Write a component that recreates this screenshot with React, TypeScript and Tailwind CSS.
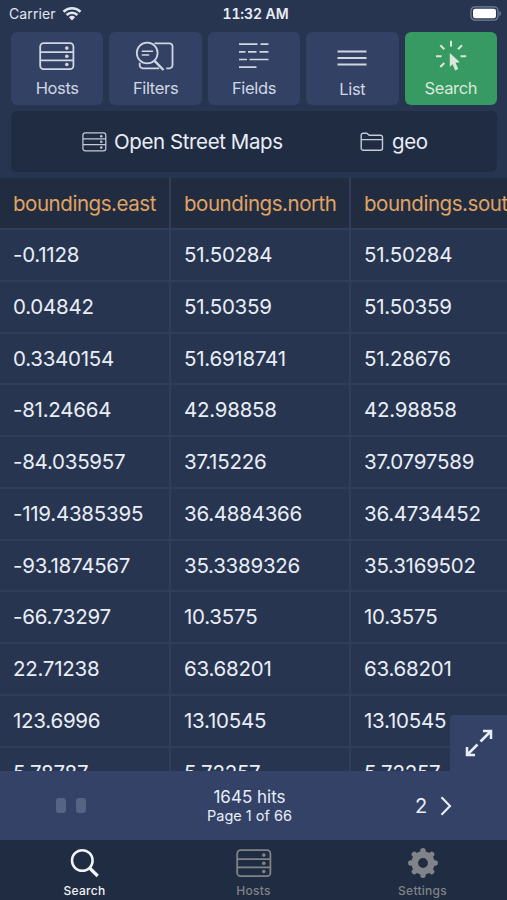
import type { ReactNode } from 'react';

const COLUMNS = ['boundings.east', 'boundings.north', 'boundings.south'];

const ROWS = [
  ['-0.1128', '51.50284', '51.50284'],
  ['0.04842', '51.50359', '51.50359'],
  ['0.3340154', '51.6918741', '51.28676'],
  ['-81.24664', '42.98858', '42.98858'],
  ['-84.035957', '37.15226', '37.0797589'],
  ['-119.4385395', '36.4884366', '36.4734452'],
  ['-93.1874567', '35.3389326', '35.3169502'],
  ['-66.73297', '10.3575', '10.3575'],
  ['22.71238', '63.68201', '63.68201'],
  ['123.6996', '13.10545', '13.10545'],
  ['5.78787', '5.72257', '5.72257'],
];

const HostsIcon = ({ className }: { className?: string }) => (
  <svg viewBox="0 0 36 29" className={className} fill="none" stroke="currentColor" strokeWidth="1.8">
    <rect x="1.2" y="1.2" width="33.2" height="26" rx="3.4" />
    <path d="M1.2 10.1h33.2M1.2 18.4h33.2" />
    <g fill="currentColor" stroke="none">
      <circle cx="27.8" cy="6.1" r="1.8" />
      <circle cx="27.8" cy="14.3" r="1.8" />
      <circle cx="27.8" cy="22.5" r="1.8" />
    </g>
  </svg>
);

const FiltersIcon = () => (
  <svg viewBox="0 0 40 30" className="mr-[2px] h-[30px] w-10" fill="none" stroke="currentColor" strokeWidth="1.8">
    <path d="M19.5 2.3h15a3 3 0 0 1 3 3v19a3 3 0 0 1-3 3h-3.2M4.7 21.8v2.5a3 3 0 0 0 3 3h16.5" />
    <circle cx="12.2" cy="12" r="10.4" />
    <path d="M7.3 10.2h10.2M7.3 13.9h6.3" strokeWidth="1.5" strokeLinecap="round" />
    <path d="M19.6 19.8 28.5 29" strokeWidth="2.5" />
  </svg>
);

const FieldsIcon = () => (
  <svg viewBox="0 0 30 26" className="h-[26px] w-[30px]" fill="none" stroke="currentColor" strokeWidth="1.7">
    <path d="M0 1.2h18.5M21.5 1.2h8M0 8.9h6.5M9 8.9h8.5M20.5 8.9h9M0 16.5h8M10.5 16.5h19M0 24.1h17.5" />
  </svg>
);

const ListIcon = () => (
  <svg viewBox="0 0 30 18" className="mt-[3px] h-[18px] w-[30px]" fill="none" stroke="currentColor" strokeWidth="1.8">
    <path d="M.5 2.5h29M.5 9h29M.5 15.5h29" />
  </svg>
);

const ClickIcon = () => (
  <svg viewBox="0 0 32 32" className="h-8 w-8" fill="none" stroke="currentColor" strokeWidth="2">
    <path d="M16 .8v5.7M1 16.2h5.6M25.5 16.2h5.7M5.3 5.2l4 4.1M27 5.2l-4 4.1M5.3 27l4-4" />
    <path d="M14.8 13 24.8 22.3l-4.3.5 2.8 6.2-3.1 1.4-2.6-6.1-2.8 2.7z" fill="currentColor" stroke="none" />
  </svg>
);

const FolderIcon = () => (
  <svg viewBox="0 0 24 20" className="h-5 w-6" fill="none" stroke="currentColor" strokeWidth="1.4">
    <path d="M1.2 16.3V3.2a2 2 0 0 1 2-2h3.6l2.4 2h11.3a2 2 0 0 1 2 2v11.1a2 2 0 0 1-2 2H3.2a2 2 0 0 1-2-2zM1.2 7.6h21.3" />
  </svg>
);

const WifiIcon = () => (
  <svg viewBox="0 0 20 15" className="h-[15px] w-5" fill="none" stroke="currentColor" strokeWidth="2.6">
    <path d="M1.5 5.7a12.2 12.2 0 0 1 17 0M4.6 9a7.7 7.7 0 0 1 10.8 0" />
    <path d="M6.9 11.3a4.5 4.5 0 0 1 6.2 0L10 14.5z" fill="currentColor" stroke="none" />
  </svg>
);

const BatteryIcon = () => (
  <svg viewBox="0 0 32 15" className="h-[15px] w-8">
    <rect x="1" y=".8" width="27" height="13.4" rx="4" fill="none" stroke="#76819a" strokeWidth="1.2" />
    <rect x="3" y="2.8" width="23" height="9.4" rx="2.2" fill="#fff" />
    <path d="M29.4 5v5c2-.8 2-4.2 0-5z" fill="#76819a" />
  </svg>
);

const GearIcon = () => (
  <svg viewBox="-15 -15 30 30" className="h-[30px] w-[30px]" fill="none" stroke="currentColor">
    <circle r="8.3" strokeWidth="6.8" />
    <path
      d="M0-11V-12.2M0 11V12.2M-11 0H-12.2M11 0H12.2M7.8-7.8l.9-.9M-7.8-7.8l-.9-.9M7.8 7.8l.9.9M-7.8 7.8l-.9.9"
      strokeWidth="5.4"
      strokeLinecap="round"
    />
  </svg>
);

interface ToolButtonProps {
  label: string;
  icon: ReactNode;
  active?: boolean;
  labelClass?: string;
}

const ToolButton = ({ label, icon, active = false, labelClass = 'pt-0' }: ToolButtonProps) => (
  <button
    className={`flex h-[73.5px] flex-col items-center rounded-[6px] ${
      active ? 'bg-[#369a62] text-[#dce8dc]' : 'bg-[#324164] text-[#d0d6e2]'
    }`}
  >
    <span className="flex h-[46.5px] items-center justify-center pt-[3px]">{icon}</span>
    <span className={`text-[16.5px] leading-[20px] tracking-[-0.35px] ${labelClass}`}>{label}</span>
  </button>
);

const TabItem = ({ label, icon, active = false }: ToolButtonProps) => (
  <button className={`flex flex-col items-center ${active ? 'text-[#f1f3f6]' : 'text-[#808387]'}`}>
    <span className="flex h-[43px] items-center justify-center pt-[3px]">{icon}</span>
    <span className="text-[12px] leading-[15px] font-medium tracking-[0.25px]">{label}</span>
  </button>
);

export default function App() {
  return (
    <div className="flex h-[900px] w-[507px] flex-col overflow-hidden bg-[#283551] font-['Inter',sans-serif] text-[#e9eef6]">
      <header className="grid h-[31.5px] shrink-0 grid-cols-3 items-center pr-[5px] pb-[5px] pl-[9px] text-[14px]">
        <div className="flex items-center gap-[6px] tracking-[0.1px] text-[#e0e5ee]">
          Carrier <WifiIcon />
        </div>
        <div className="text-center text-[14px] font-semibold tracking-[-0.1px] tabular-nums">11:32 AM</div>
        <div className="flex justify-end">
          <BatteryIcon />
        </div>
      </header>

      <nav className="grid shrink-0 grid-cols-5 gap-[6px] pr-[10px] pl-[11px]">
        <ToolButton label="Hosts" icon={<HostsIcon className="h-[29px] w-9" />} />
        <ToolButton label="Filters" icon={<FiltersIcon />} />
        <ToolButton label="Fields" icon={<FieldsIcon />} />
        <ToolButton label="List" icon={<ListIcon />} labelClass="pt-[1px]" />
        <ToolButton label="Search" icon={<ClickIcon />} active />
      </nav>

      <div className="mt-[6px] mr-[10px] mb-[6px] ml-[11px] flex h-[61px] shrink-0 items-center rounded-[6px] bg-[#202c42] text-[20.5px] tracking-[-0.4px]">
        <div className="flex w-[343px] items-center gap-[7px] pl-[71px]">
          <HostsIcon className="h-[20px] w-[25px] text-[#c3cad8]" />
          <span className="pt-[2px]">Open Street Maps</span>
        </div>
        <div className="flex items-center gap-[8px] pl-[6px]">
          <span className="text-[#c3cad8]"><FolderIcon /></span>
          <span className="pt-[2px]">geo</span>
        </div>
      </div>

      <main className="relative h-[593px] shrink-0 overflow-hidden">
        <table className="w-[550px] table-fixed border-collapse text-[20.5px] tracking-[-0.45px]">
          <colgroup>
            <col className="w-[170px]" />
            <col className="w-[180px]" />
            <col className="w-[200px]" />
          </colgroup>
          <thead>
            <tr className="h-[51px] border-b-2 border-[#303d5b] bg-[#212c41]">
              {COLUMNS.map((col) => (
                <th key={col} className="border-r-2 border-[#303d5b] p-0 pt-[2px] pl-[13px] text-left font-normal text-[#e0a462]">
                  {col}
                </th>
              ))}
            </tr>
          </thead>
          <tbody className="tracking-[-0.25px]">
            {ROWS.map((row, i) => (
              <tr key={i} className="h-[51.75px] border-b-2 border-[#303d5b]">
                {row.map((value, j) => (
                  <td key={j} className="border-r-2 border-[#303d5b] p-0 pt-[1px] pl-[13px]">
                    {value}
                  </td>
                ))}
              </tr>
            ))}
          </tbody>
        </table>
        <button className="absolute right-0 bottom-0 flex h-[56px] w-[57px] items-center justify-center rounded-tl-[4px] bg-[#334266]">
          <svg viewBox="0 0 28 28" className="h-7 w-7" fill="none" stroke="currentColor" strokeWidth="2.5">
            <path d="M15.5 12.5 25.5 2.5M18 2h8v8M12.5 15.5l-10 10M2 18v8h8" />
          </svg>
        </button>
      </main>

      <section className="grid h-[69px] shrink-0 grid-cols-[140px_219px_148px] items-center bg-[#334266]">
        <div className="flex justify-center gap-[10px] pl-[1px]">
          <span className="h-[15px] w-[10px] rounded-[3px] bg-[#556484]" />
          <span className="h-[15px] w-[10px] rounded-[3px] bg-[#556484]" />
        </div>
        <div className="text-center">
          <div className="text-[17px] leading-[20px]">1645 hits</div>
          <div className="text-[14.5px] leading-[18px]">Page 1 of 66</div>
        </div>
        <div className="flex items-center gap-[13px] pl-[56px] text-[20px]">
          2
          <svg viewBox="0 0 12 20" className="h-5 w-3" fill="none" stroke="currentColor" strokeWidth="2.1">
            <path d="m1.5 1.3 8.5 8.7-8.5 8.7" />
          </svg>
        </div>
      </section>

      <footer className="grid h-[60px] shrink-0 grid-cols-3 bg-[#202c41]">
        <TabItem
          label="Search"
          active
          icon={
            <svg viewBox="0 0 30 30" className="h-[30px] w-[30px]" fill="none" stroke="currentColor" strokeWidth="2.5">
              <circle cx="12.3" cy="12.5" r="10.3" />
              <path d="m19.6 20 8.1 8" strokeWidth="3.2" />
            </svg>
          }
        />
        <TabItem label="Hosts" icon={<HostsIcon className="h-[29px] w-9" />} />
        <TabItem label="Settings" icon={<GearIcon />} />
      </footer>
    </div>
  );
}
